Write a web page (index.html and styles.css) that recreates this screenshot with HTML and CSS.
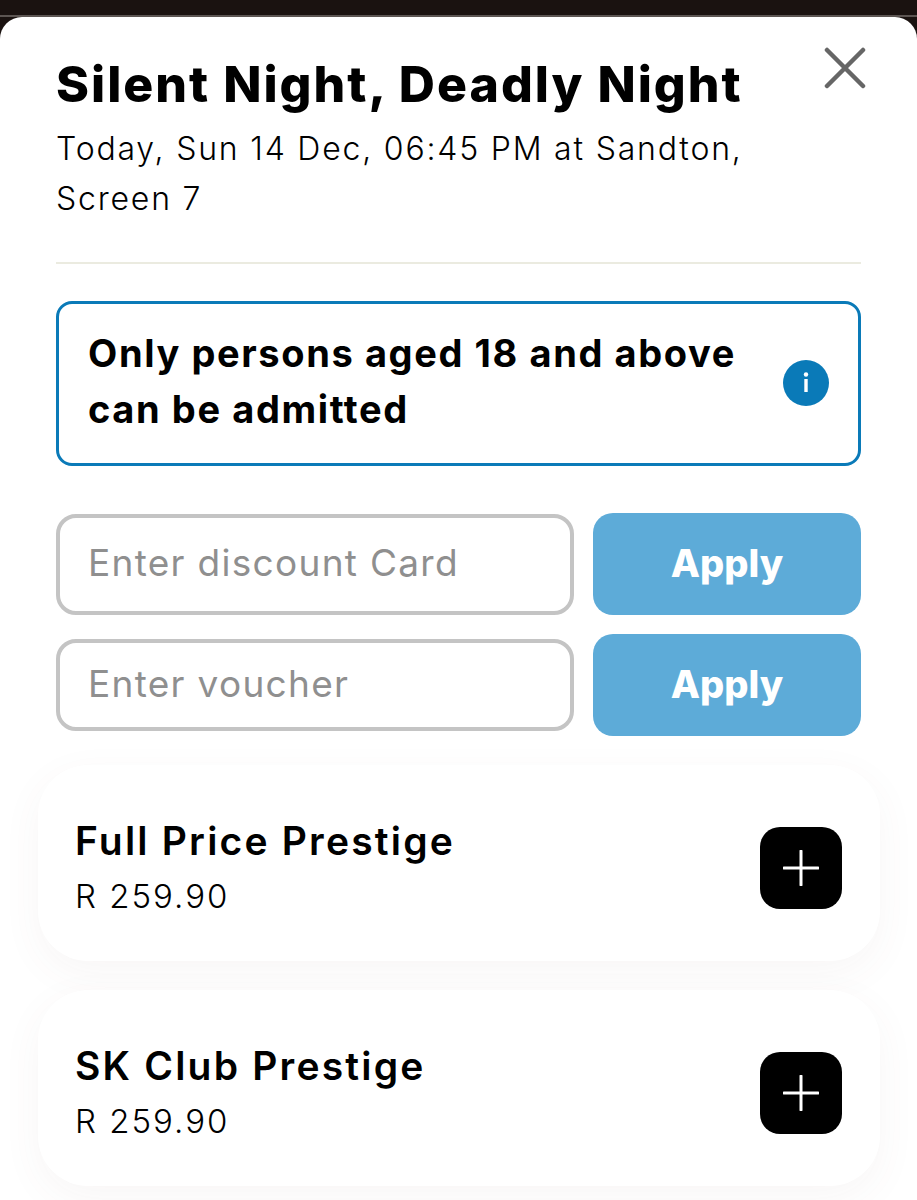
FILE: index.html
```html
<!DOCTYPE html>
<html lang="en">
<head>
    <meta charset="UTF-8">
    <title>Silent Night, Deadly Night</title>
    <link rel="stylesheet" href="styles.css">
</head>
<body>
<div class="topbar"></div>
<div class="sheet">
    <div class="head">
        <div class="head-text">
            <h1 class="title">Silent Night, Deadly Night</h1>
            <p class="when">Today, Sun 14 Dec, 06:45 PM at Sandton, Screen 7</p>
        </div>
        <svg class="close" width="42" height="42" viewBox="0 0 42 42">
            <path d="M3 3L39 39M39 3L3 39" stroke="#666" stroke-width="4.5" stroke-linecap="round" fill="none"/>
        </svg>
    </div>
    <div class="divider"></div>

    <div class="notice">
        <span class="notice-text">Only persons aged 18 and above can be admitted</span>
        <span class="info">
            <svg width="46" height="46" viewBox="0 0 46 46">
                <circle cx="23" cy="23" r="23" fill="#0a7ab8"/>
                <circle cx="23" cy="14.500" r="2.200" fill="#fff"/>
                <rect x="21.300" y="19" width="3.400" height="13" fill="#fff"/>
            </svg>
        </span>
    </div>

    <div class="code-row">
        <div class="code-input tall">Enter discount Card</div>
        <div class="apply">Apply</div>
    </div>
    <div class="code-row">
        <div class="code-input">Enter voucher</div>
        <div class="apply">Apply</div>
    </div>

    <div class="tickets">
        <div class="ticket">
            <div class="ticket-info">
                <div class="ticket-name">Full Price Prestige</div>
                <div class="ticket-price">R 259.90</div>
            </div>
            <div class="add">
                <svg width="36" height="36" viewBox="0 0 36 36">
                    <path d="M18 1V35M1 18H35" stroke="#fff" stroke-width="3" stroke-linecap="round"/>
                </svg>
            </div>
        </div>
        <div class="ticket">
            <div class="ticket-info">
                <div class="ticket-name">SK Club Prestige</div>
                <div class="ticket-price">R 259.90</div>
            </div>
            <div class="add">
                <svg width="36" height="36" viewBox="0 0 36 36">
                    <path d="M18 1V35M1 18H35" stroke="#fff" stroke-width="3" stroke-linecap="round"/>
                </svg>
            </div>
        </div>
    </div>
</div>
</body>
</html>
```

FILE: styles.css
```css
*{
    margin: 0;
    padding: 0;
    box-sizing: border-box;
}
html, body{
    height: 1200px;
    overflow: hidden;
}
body{
    background: #1a1210;
    font-family: "Inter", "Liberation Sans", sans-serif;
    color: #000;
}
.topbar{
    height: 17px;
    border-bottom: 2px solid #5c5552;
}
.sheet{
    height: 1183px;
    background: #fff;
    border-radius: 22px 22px 0 0;
    padding: 0 56px;
}
.head{
    display: flex;
    justify-content: space-between;
    align-items: flex-start;
}
.head-text{
    width: 700px;
    padding-top: 36px;
}
.title{
    font-size: 50px;
    line-height: 62px;
    font-weight: 800;
    letter-spacing: 2px;
    white-space: nowrap;
}
.when{
    margin-top: 9px;
    font-size: 32px;
    line-height: 50px;
    font-weight: 300;
    letter-spacing: 1.800px;
}
.close{
    margin-top: 30px;
    margin-right: -5px;
}
.divider{
    height: 2px;
    margin-top: 38px;
    background: #ebebe0;
}
.notice{
    display: flex;
    align-items: center;
    justify-content: space-between;
    height: 165px;
    margin-top: 37px;
    padding: 0 29px;
    border: 3px solid #0a7ab8;
    border-radius: 16px;
}
.notice-text{
    width: 670px;
    padding-bottom: 6px;
    font-size: 38px;
    line-height: 56px;
    font-weight: 700;
    letter-spacing: 1.600px;
}
.info{
    margin-top: 2px;
}
.code-row{
    display: flex;
    align-items: center;
    gap: 19px;
    height: 102px;
    margin-bottom: 19px;
}
.notice + .code-row{
    margin-top: 47px;
}
.code-input{
    flex: 1;
    height: 92px;
    padding-left: 28px;
    border: 4px solid #c4c4c4;
    border-radius: 20px;
    font-size: 37px;
    line-height: 82px;
    font-weight: 400;
    letter-spacing: 1.300px;
    color: #8f8f8f;
}
.code-input.tall{
    height: 101px;
    line-height: 90px;
}
.apply{
    width: 268px;
    height: 102px;
    line-height: 100px;
    text-align: center;
    background: #5dabd8;
    border-radius: 20px;
    color: #fff;
    font-size: 38px;
    font-weight: 800;
}
.tickets{
    display: flex;
    flex-direction: column;
    gap: 29px;
    margin: 29px -19px 0 -18px;
}
.ticket{
    display: flex;
    align-items: center;
    justify-content: space-between;
    height: 196px;
    padding: 10px 38px 0 37px;
    background: #fff;
    border-radius: 50px;
    box-shadow: 0 12px 40px rgba(120, 80, 70, .05);
}
.ticket-info{
    padding-bottom: 4px;
}
.ticket-name{
    font-size: 39px;
    line-height: 50px;
    font-weight: 600;
    letter-spacing: 2.200px;
}
.ticket-price{
    margin-top: 9px;
    font-size: 33px;
    line-height: 42px;
    font-weight: 300;
    letter-spacing: 2px;
}
.add{
    display: flex;
    align-items: center;
    justify-content: center;
    width: 82px;
    height: 82px;
    background: #000;
    border-radius: 20px;
}
```
